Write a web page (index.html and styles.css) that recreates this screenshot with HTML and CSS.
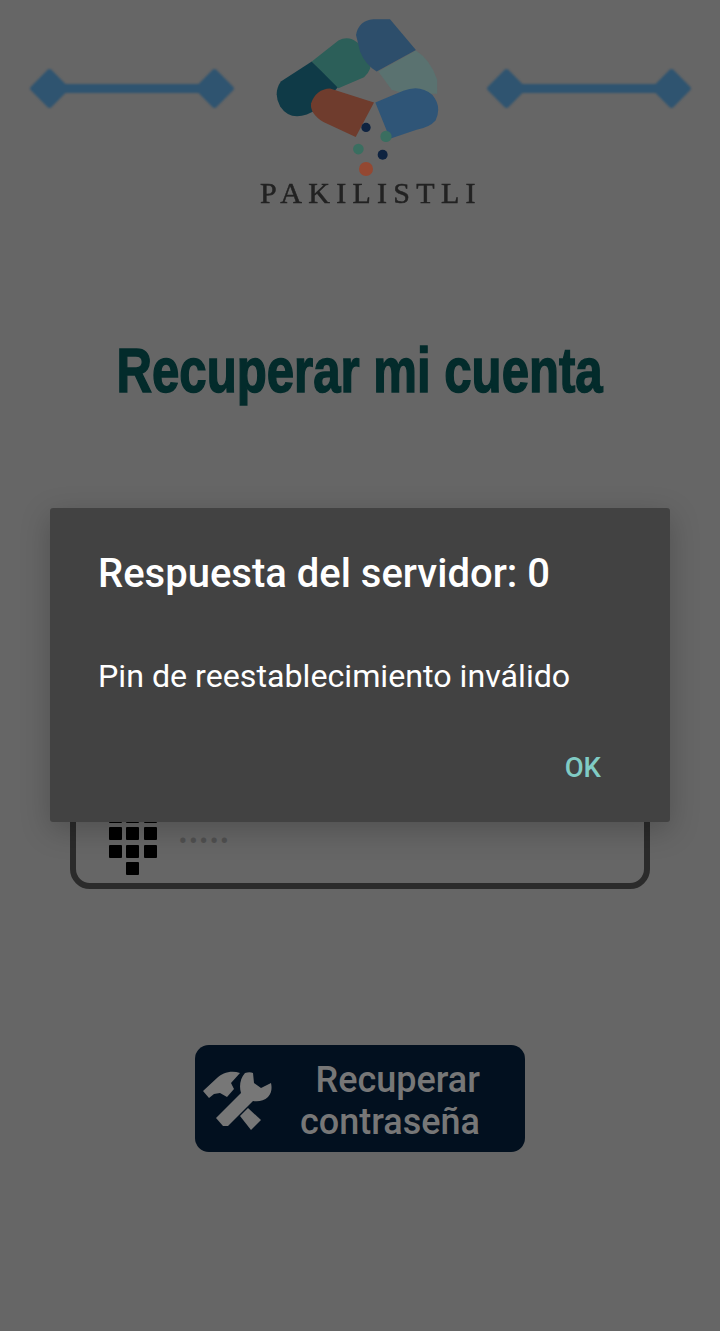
FILE: index.html
```html
<!DOCTYPE html>
<html lang="es">
<head>
  <meta charset="UTF-8" />
  <meta name="viewport" content="width=device-width, initial-scale=1.0" />
  <title>Recuperar mi cuenta</title>
  <link rel="stylesheet" href="styles.css">
</head>
<body>
  <div class="page">
    <header class="brand">
      <div class="ornament"><span class="diamond"></span><span class="bar"></span><span class="diamond"></span></div>
      <div class="logo">
        <svg class="logo-mark" viewBox="0 0 690 520" width="230" height="173">
          <path fill="#0f3a47" d="M155 155 L62 215 Q38 250 60 290 Q88 332 140 314 L180 295 L235 230 Z"/>
          <path fill="#2c5f59" d="M155 155 L235 92 Q265 76 292 98 L332 150 Q337 180 312 202 L235 235 Z"/>
          <path fill="#5a7270" d="M355 185 L468 122 Q512 150 532 210 L532 252 L430 250 L395 240 Z"/>
          <path fill="#2d4e6b" d="M288 75 Q296 32 340 28 L390 28 L468 120 L350 185 Q316 165 300 125 Z"/>
          <path fill="#2f5577" d="M346 278 L430 243 Q480 223 517 255 Q547 290 527 332 Q510 352 470 360 L390 387 Z"/>
          <path fill="#6f3c2d" d="M342 278 L287 382 L190 337 Q148 310 153 280 Q168 238 210 236 Z"/>
          <circle cx="318" cy="353" r="14" fill="#0e2340"/>
          <circle cx="378" cy="380" r="17" fill="#3a6e60"/>
          <circle cx="295" cy="418" r="16" fill="#3a6e60"/>
          <circle cx="368" cy="435" r="15" fill="#0e2340"/>
          <circle cx="318" cy="478" r="21" fill="#944832"/>
        </svg>
        <span class="logo-name">PAKILISTLI</span>
      </div>
      <div class="ornament"><span class="diamond"></span><span class="bar"></span><span class="diamond"></span></div>
    </header>

    <h1 class="title">Recuperar mi cuenta</h1>

    <div class="field">
      <div class="keypad">
        <span></span><span></span><span></span>
        <span></span><span></span><span></span>
        <span></span><span></span><span></span>
        <span class="key-zero"></span>
      </div>
      <span class="field-dots">•••••</span>
    </div>

    <button class="recover">
      <svg class="recover-icon" viewBox="0 0 80 72" width="80" height="72">
        <path fill="#777" d="M5 28 L19 15 C24 10 33 7 42 10 L33 20 L36 26 L29 34 L22 30 L16 31 L11 35 Z"/>
        <path fill="#777" d="M47 10 C50 9 53 9 55 10 L56 20 L63 25 L73 20 C74 24 74 30 70 34 C66 38 60 39 55 38 L30 63 L25 63 L18 55 L43 30 C41 24 42 15 47 10 Z"/>
        <path fill="#777" d="M50 45 L63 57 L53 67 L42 53 Z"/>
      </svg>
      <span class="recover-label">Recuperar<br>contraseña</span>
    </button>
  </div>

  <div class="dialog">
    <h2 class="dialog-title">Respuesta del servidor: 0</h2>
    <p class="dialog-msg">Pin de reestablecimiento inválido</p>
    <div class="dialog-actions"><span class="dialog-ok">OK</span></div>
  </div>
</body>
</html>
```

FILE: styles.css
```css
body {
  margin: 0;
  background-color: #666666;
  font-family: Roboto, sans-serif;
  height: 1331px;
  overflow: hidden;
}

.page {
  display: flex;
  flex-direction: column;
  align-items: center;
}

/* header */
.brand {
  width: 660px;
  height: 220px;
  padding-top: 10px;
  box-sizing: border-box;
  display: flex;
  justify-content: space-between;
  align-items: flex-start;
}

.ornament {
  width: 203px;
  height: 38px;
  margin-top: 59px;
  display: flex;
  align-items: center;
  filter: blur(0.8px);
}

.diamond {
  width: 29px;
  height: 29px;
  margin: 0 4.5px;
  flex: none;
  background-color: #2f5470;
  border-radius: 3px;
  transform: rotate(45deg);
}

.bar {
  flex: 1;
  height: 9px;
  margin: 0 -6px;
  background-color: #2f5470;
}

.logo {
  width: 254px;
  padding-left: 27px;
  box-sizing: border-box;
  display: flex;
  flex-direction: column;
  align-items: flex-start;
}

.logo-mark {
  filter: blur(0.7px);
}

.logo-name {
  margin-top: -5px;
  font-family: "Liberation Serif", serif;
  font-size: 30px;
  line-height: 30px;
  letter-spacing: 6.3px;
  white-space: nowrap;
  color: #222222;
  -webkit-text-stroke: 0.5px #222222;
  filter: blur(0.5px);
}

/* title */
.title {
  margin: 112px 0 0;
  font-family: "Liberation Sans", sans-serif;
  font-size: 63px;
  line-height: 76px;
  font-weight: 700;
  white-space: nowrap;
  color: #032b2b;
  -webkit-text-stroke: 1.5px #032b2b;
  transform: scaleX(0.78);
}

/* pin field, mostly under the dialog */
.field {
  box-sizing: border-box;
  width: 580px;
  height: 109px;
  margin-top: 372px;
  padding: 24px 0 0 33px;
  display: flex;
  gap: 22px;
  border: 6px solid #2b2b2b;
  border-radius: 20px;
}

.keypad {
  display: grid;
  grid-template-columns: repeat(3, 13px);
  grid-auto-rows: 13px;
  gap: 4.3px;
}

.keypad span {
  background-color: #000;
  border-radius: 1px;
}

.keypad .key-zero {
  grid-column: 2;
}

.field-dots {
  margin-top: 20px;
  font-size: 26px;
  line-height: 22px;
  letter-spacing: 1.6px;
  color: #505050;
}

/* button */
.recover {
  width: 330px;
  height: 107px;
  margin-top: 156px;
  padding: 0 45px 0 0;
  display: flex;
  align-items: center;
  justify-content: space-between;
  background-color: #02101f;
  border: none;
  border-radius: 14px;
}

.recover-icon {
  margin-left: 3px;
}

.recover-label {
  padding-top: 4px;
  font-family: Roboto, sans-serif;
  font-size: 36px;
  line-height: 42px;
  font-weight: 500;
  text-align: right;
  color: #777777;
}

/* dialog */
.dialog {
  position: absolute;
  left: 50px;
  top: 508px;
  box-sizing: border-box;
  width: 620px;
  height: 314px;
  padding: 44px 49px 0 48px;
  background-color: #424242;
  border-radius: 3px;
  box-shadow: 0 8px 30px rgba(0, 0, 0, 0.22);
}

.dialog-title {
  margin: 0;
  font-size: 40px;
  line-height: 44px;
  font-weight: 500;
  color: #ffffff;
}

.dialog-msg {
  margin: 62px 0 0;
  font-size: 32.2px;
  line-height: 36px;
  color: #ffffff;
}

.dialog-actions {
  margin-top: 58px;
  margin-right: 20px;
  text-align: right;
}

.dialog-ok {
  font-size: 27.5px;
  line-height: 32px;
  font-weight: 500;
  color: #80cbc4;
}
```
